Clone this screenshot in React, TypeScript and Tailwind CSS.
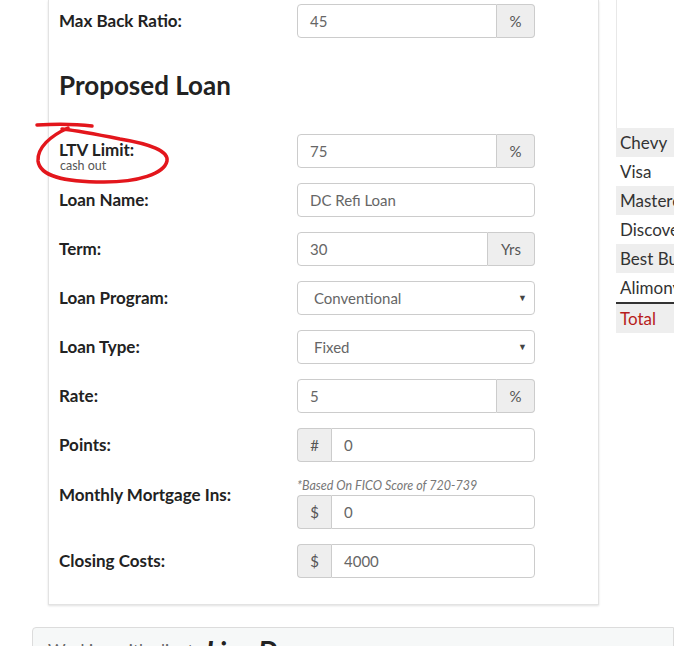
const font = { fontFamily: "Lato, 'Open Sans', sans-serif" };

function Field({
  value,
  suffix,
  prefix,
  sw = "w-[38px]",
}: {
  value: string;
  suffix?: string;
  prefix?: string;
  sw?: string;
}) {
  return (
    <div className="flex h-[34px] w-[238px]">
      {prefix && (
        <span className="flex w-[34px] items-center justify-center rounded-l-[4px] border border-r-0 border-[#ccc] bg-[#eee] text-[15px] text-[#555]">
          {prefix}
        </span>
      )}
      <div
        className={`flex flex-1 items-center border border-[#ccc] bg-white px-3 text-[15px] text-[#666] ${
          prefix ? "rounded-r-[4px]" : suffix ? "rounded-l-[4px]" : "rounded-[4px]"
        }`}
      >
        {value}
      </div>
      {suffix && (
        <span
          className={`flex items-center justify-center rounded-r-[4px] border border-l-0 border-[#ccc] bg-[#eee] text-[15px] text-[#555] ${sw}`}
        >
          {suffix}
        </span>
      )}
    </div>
  );
}

function Select({ value }: { value: string }) {
  return (
    <div className="flex h-[34px] w-[238px] items-center justify-between rounded-[4px] border border-[#ccc] bg-white pl-4 pr-[7px] text-[15px] text-[#666]">
      <span>{value}</span>
      <span className="text-[9px] text-[#444]">▼</span>
    </div>
  );
}

function Row({ label, children }: { label: string; children: React.ReactNode }) {
  return (
    <div className="mb-[15px] flex items-center">
      <div className="w-[238px] text-[17px] font-bold leading-[22px] text-[#222]">{label}</div>
      {children}
    </div>
  );
}

const debts = ["Chevy", "Visa", "Mastercard", "Discover", "Best Buy", "Alimony"];

export default function App() {
  return (
    <div className="relative h-[646px] w-[674px] overflow-hidden bg-white" style={font}>
      <div className="flex">
        <div className="ml-[48px] w-[551px] shrink-0 border-x border-b border-[#e3e3e3] bg-white pb-[11px] pl-[10px] pt-[4px] shadow-[0_1px_2px_rgba(0,0,0,0.12)]">
          <Row label="Max Back Ratio:">
            <Field value="45" suffix="%" />
          </Row>

          <h3 className="mb-[36px] mt-[34px] text-[26px] font-bold leading-[26px] text-[#222]">
            Proposed Loan
          </h3>

          <div className="mb-[15px] flex items-start">
            <div className="h-[34px] w-[238px] pt-[5px]">
              <div className="text-[17px] font-bold leading-[21px] text-[#222]">LTV Limit:</div>
              <div className="pl-[1px] text-[12.5px] leading-[12px] text-[#555]">cash out</div>
            </div>
            <Field value="75" suffix="%" />
          </div>

          <Row label="Loan Name:">
            <Field value="DC Refi Loan" />
          </Row>
          <Row label="Term:">
            <Field value="30" suffix="Yrs" sw="w-[47px]" />
          </Row>
          <Row label="Loan Program:">
            <Select value="Conventional" />
          </Row>
          <Row label="Loan Type:">
            <Select value="Fixed" />
          </Row>
          <Row label="Rate:">
            <Field value="5" suffix="%" />
          </Row>
          <Row label="Points:">
            <Field value="0" prefix="#" />
          </Row>

          <div className="mb-[15px] flex items-start">
            <div className="w-[238px] pt-[7px] text-[17px] font-bold leading-[22px] text-[#222]">
              Monthly Mortgage Ins:
            </div>
            <div>
              <div className="h-[18px] pt-[1px] text-[12.5px] italic leading-[16px] text-[#777]">
                *Based On FICO Score of 720-739
              </div>
              <Field value="0" prefix="$" />
            </div>
          </div>

          <Row label="Closing Costs:">
            <Field value="4000" prefix="$" />
          </Row>
        </div>

        <div className="ml-[17px] w-[200px] shrink-0">
          <div className="h-[128px] border-l border-[#e8e8e8]" />
          <div className="text-[17px] text-[#333]">
            {debts.map((d, i) => (
              <div
                key={d}
                className={`h-[29px] whitespace-nowrap pl-[4px] leading-[29px] ${
                  i % 2 === 0 ? "bg-[#eee]" : "bg-white"
                }`}
              >
                {d}
              </div>
            ))}
            <div className="h-[31px] border-t-2 border-[#333] bg-[#eee] pl-[4px] leading-[29px] text-[#b71c1c]">
              Total
            </div>
          </div>
        </div>
      </div>

      <div className="ml-[32px] mt-[22px] flex items-center gap-[8px] whitespace-nowrap rounded-tl-[4px] border border-[#dcdcdc] bg-[#f6f8f8] pl-[15px] pt-[8px]">
        <span className="text-[17px] leading-[20px] text-[#666]">Working with client:</span>
        <span className="text-[28px] font-bold italic leading-[30px] text-[#222]">Lisa Doe</span>
      </div>

      <svg
        className="pointer-events-none absolute left-0 top-0"
        width="674"
        height="646"
        viewBox="0 0 674 646"
        fill="none"
      >
        <path
          d="M37 125 C55 124 75 124 92 126"
          stroke="#e3161c"
          strokeWidth="3.5"
          strokeLinecap="round"
        />
        <path
          d="M68 128 C50 136 37 148 38 161 C40 176 62 182 104 182 C138 182 164 174 167 161 C169 151 150 144 120 139 C100 135 80 131 62 129"
          stroke="#e3161c"
          strokeWidth="3.5"
          strokeLinecap="round"
        />
      </svg>
    </div>
  );
}
